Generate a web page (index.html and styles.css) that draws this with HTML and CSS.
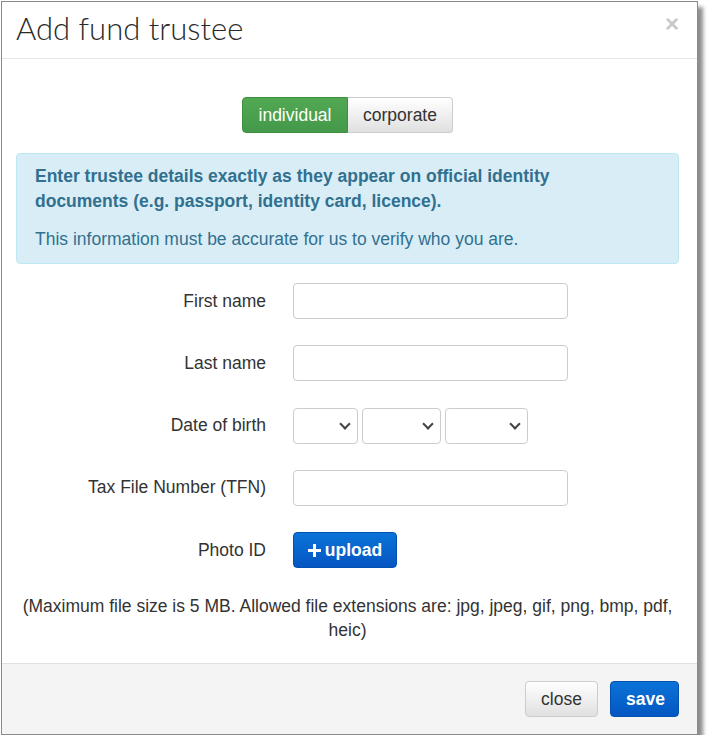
FILE: index.html
```html
<!DOCTYPE html>
<html lang="en">
<head>
  <meta charset="UTF-8" />
  <title>Add fund trustee</title>
  <link rel="stylesheet" href="styles.css">
</head>
<body>

<div class="modal">
  <div class="modal-header">
    <h2>Add fund trustee</h2>
    <button class="dismiss">&times;</button>
  </div>

  <div class="modal-body">
    <div class="toggle-group">
      <button class="toggle active">individual</button>
      <button class="toggle">corporate</button>
    </div>

    <div class="alert">
      <p class="alert-strong">Enter trustee details exactly as they appear on official identity documents (e.g. passport, identity card, licence).</p>
      <p>This information must be accurate for us to verify who you are.</p>
    </div>

    <div class="form-row">
      <label>First name</label>
      <input type="text" class="field">
    </div>

    <div class="form-row">
      <label>Last name</label>
      <input type="text" class="field">
    </div>

    <div class="form-row">
      <label>Date of birth</label>
      <div class="dob">
        <div class="select day"><span class="chev"></span></div>
        <div class="select month"><span class="chev"></span></div>
        <div class="select year"><span class="chev"></span></div>
      </div>
    </div>

    <div class="form-row">
      <label>Tax File Number (TFN)</label>
      <input type="text" class="field">
    </div>

    <div class="form-row">
      <label>Photo ID</label>
      <button class="btn btn-blue upload">
        <svg width="13" height="13" viewBox="0 0 13 13"><path d="M5 0h3v5h5v3H8v5H5V8H0V5h5z" fill="#fff"/></svg>
        upload
      </button>
    </div>

    <p class="note">(Maximum file size is 5 MB. Allowed file extensions are: jpg, jpeg, gif, png, bmp, pdf, heic)</p>
  </div>

  <div class="modal-footer">
    <button class="btn btn-default">close</button>
    <button class="btn btn-blue">save</button>
  </div>
</div>

</body>
</html>
```

FILE: styles.css
```css
body {
  margin: 0;
  padding: 1px 0 0 1px;
  font-family: 'Liberation Sans', Arial, sans-serif;
  background: #fff;
  color: #333;
}

.modal {
  width: 697px;
  height: 734px;
  box-sizing: border-box;
  border: 1px solid #8a8a8a;
  background: #fff;
  box-shadow: 5px 6px 4px rgba(0, 0, 0, 0.45);
  display: flex;
  flex-direction: column;
}

.modal-header {
  height: 56px;
  border-bottom: 1px solid #e5e5e5;
  display: flex;
  align-items: center;
  justify-content: space-between;
  padding: 0 18px 0 14px;
}

.modal-header h2 {
  margin: 0;
  font-family: 'Lato', sans-serif;
  font-weight: 300;
  font-size: 31px;
  color: #2a2a2a;
  padding-bottom: 4px;
}

.dismiss {
  border: none;
  background: none;
  font-family: 'Liberation Sans', Arial, sans-serif;
  font-weight: bold;
  font-size: 24px;
  color: #c8c8c8;
  padding: 0;
  margin-bottom: 12px;
  cursor: pointer;
}

.modal-body {
  flex: 1;
  padding: 38px 18px 0 14px;
}

.toggle-group {
  display: flex;
  justify-content: center;
  margin-bottom: 20px;
}

.toggle {
  height: 36px;
  font-family: inherit;
  font-size: 17.5px;
  color: #333;
  border: 1px solid #ccc;
  background: linear-gradient(#fff, #e0e0e0);
  cursor: pointer;
}

.toggle:first-child {
  width: 106px;
  border-radius: 4px 0 0 4px;
}

.toggle:last-child {
  width: 105px;
  border-left: none;
  border-radius: 0 4px 4px 0;
}

.toggle.active {
  background: linear-gradient(#52a852, #44994a);
  border-color: #3e8f3e;
  color: #fff;
}

.alert {
  background: #d9edf7;
  border: 1px solid #bce8f1;
  border-radius: 4px;
  color: #31708f;
  font-size: 17.5px;
  line-height: 25px;
  padding: 10px 18px 11px;
  margin-bottom: 19px;
}

.alert p {
  margin: 0;
}

.alert .alert-strong {
  font-weight: bold;
  margin-bottom: 13px;
  padding-right: 80px;
}

.form-row {
  display: flex;
  align-items: center;
  margin-bottom: 26.3px;
  font-size: 17.5px;
}

.form-row label {
  width: 250px;
  text-align: right;
  margin-right: 27px;
  color: #333;
}

.field {
  width: 275px;
  height: 36px;
  box-sizing: border-box;
  border: 1px solid #ccc;
  border-radius: 4px;
  font-size: 17.5px;
  padding: 0 10px;
}

.dob {
  display: flex;
  gap: 4px;
}

.select {
  height: 36px;
  box-sizing: border-box;
  border: 1px solid #ccc;
  border-radius: 4px;
  display: flex;
  align-items: center;
  justify-content: flex-end;
  padding-right: 8px;
}

.select.day { width: 65px; }
.select.month { width: 79px; }
.select.year { width: 83px; }

.chev {
  width: 6px;
  height: 6px;
  border-right: 2px solid #444;
  border-bottom: 2px solid #444;
  transform: rotate(45deg);
  margin-top: -4px;
}

.btn {
  height: 36px;
  border-radius: 4px;
  font-family: inherit;
  font-size: 17.5px;
  cursor: pointer;
  padding: 0 15px;
}

.btn-blue {
  background: linear-gradient(#0a73d8, #0556c2);
  border: 1px solid #0450b0;
  color: #fff;
  font-weight: bold;
}

.btn-default {
  background: linear-gradient(#fff, #e0e0e0);
  border: 1px solid #ccc;
  color: #333;
}

.upload {
  width: 104px;
  display: flex;
  align-items: center;
  justify-content: center;
  gap: 4px;
  padding: 0;
}

.note {
  margin: 26px 0 0;
  text-align: center;
  font-size: 17.5px;
  line-height: 24px;
}

.modal-footer {
  height: 70px;
  border-top: 1px solid #e0e0e0;
  background: #f4f4f4;
  display: flex;
  align-items: center;
  justify-content: flex-end;
  gap: 12px;
  padding: 0 18px;
}

.modal-footer .btn-default {
  width: 73px;
}

.modal-footer .btn-blue {
  width: 69px;
}
```
